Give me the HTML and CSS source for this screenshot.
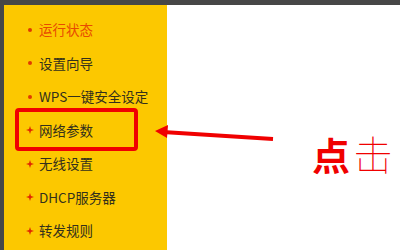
FILE: index.html
```html
<!DOCTYPE html>
<html lang="zh">
<head>
<meta charset="utf-8">
<link rel="stylesheet" href="styles.css">
</head>
<body>
<div class="topbar"></div>
<div class="layout">
  <div class="edge"></div>
  <nav class="sidebar">
    <div class="item active"><span class="dot"></span><span class="label">运行状态</span></div>
    <div class="item"><span class="dot"></span><span class="label">设置向导</span></div>
    <div class="item"><span class="dot"></span><span class="label">WPS一键安全设定</span></div>
    <div class="item"><svg class="star" viewBox="0 0 8 8"><path d="M4 0 L5 3 L8 4 L5 5 L4 8 L3 5 L0 4 L3 3 Z"/></svg><span class="label">网络参数</span></div>
    <div class="item"><svg class="star" viewBox="0 0 8 8"><path d="M4 0 L5 3 L8 4 L5 5 L4 8 L3 5 L0 4 L3 3 Z"/></svg><span class="label">无线设置</span></div>
    <div class="item"><svg class="star" viewBox="0 0 8 8"><path d="M4 0 L5 3 L8 4 L5 5 L4 8 L3 5 L0 4 L3 3 Z"/></svg><span class="label">DHCP服务器</span></div>
    <div class="item"><svg class="star" viewBox="0 0 8 8"><path d="M4 0 L5 3 L8 4 L5 5 L4 8 L3 5 L0 4 L3 3 Z"/></svg><span class="label">转发规则</span></div>
  </nav>
  <main class="content"></main>
</div>
<div class="highlight"></div>
<svg class="arrow" width="400" height="250" viewBox="0 0 400 250">
  <line x1="163" y1="132" x2="273" y2="139" stroke="#f00000" stroke-width="4"/>
  <polygon points="155,131 168,125 167,138" fill="#f00000"/>
</svg>
<div class="callout"><span class="bold">点</span><span class="thin">击</span></div>
</body>
</html>
```
FILE: styles.css
```css
html, body {
  margin: 0;
  padding: 0;
  width: 400px;
  height: 250px;
  overflow: hidden;
  background: #ffffff;
  font-family: "Noto Sans CJK SC", "Liberation Sans", sans-serif;
}
.topbar {
  height: 5px;
  background: #474747;
}
.layout {
  display: flex;
  height: 245px;
}
.edge {
  width: 4px;
  background: #474747;
}
.sidebar {
  width: 163px;
  background: #fcc800;
  padding-top: 8px;
  box-sizing: border-box;
}
.item {
  height: 33.5px;
  display: flex;
  align-items: center;
  padding-left: 22px;
  font-size: 13.5px;
  color: #33301c;
}
.item.active {
  color: #e84a00;
}
.dot {
  width: 4px;
  height: 4px;
  border-radius: 50%;
  background: #e03a00;
  margin: 0 7px 0 2px;
}
.star {
  width: 8px;
  height: 8px;
  fill: #e02800;
  margin: 0 5px 0 0;
}
.label {
  line-height: 1;
}
.content {
  flex: 1;
  background: #ffffff;
}
.highlight {
  position: absolute;
  left: 15px;
  top: 108px;
  width: 123px;
  height: 43px;
  box-sizing: border-box;
  border: 4px solid #f00000;
  border-radius: 4px;
}
.arrow {
  position: absolute;
  left: 0;
  top: 0;
}
.callout {
  position: absolute;
  left: 312px;
  top: 129px;
  font-size: 38px;
  line-height: 48px;
  color: #f00000;
  white-space: nowrap;
}
.callout .bold {
  font-weight: 700;
}
.callout .thin {
  font-weight: 100;
  font-size: 40px;
  margin-left: 3px;
}
```
